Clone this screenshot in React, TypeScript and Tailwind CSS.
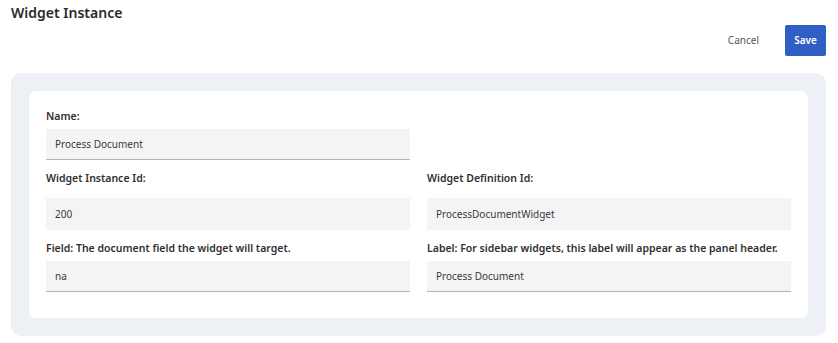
export default function App() {
  const label = "text-[10.5px] leading-[16px] font-semibold text-[#303030]";
  const input =
    "h-[31px] bg-[#f4f4f4] px-[9px] flex items-center text-[10px] text-[#3a3a3a]";

  return (
    <div className="w-[838px] h-[343px] bg-white font-['Noto_Sans',sans-serif] pt-[3px]">
      <h1 className="px-[11px] text-[14px] leading-[20px] font-semibold text-[#2b2b2b]">
        Widget Instance
      </h1>

      <div className="mt-[2px] flex items-center justify-end gap-[26px] pr-[12px]">
        <button className="text-[10px] text-[#555555]">Cancel</button>
        <button className="h-[31px] w-[41px] rounded-[2px] bg-[#2f5ec4] text-[10px] font-semibold text-white">
          Save
        </button>
      </div>

      <div className="mx-[11px] mr-[12px] mt-[17px] rounded-[10px] bg-[#edf0f4] p-[18px]">
        <div className="rounded-[7px] bg-white px-[17px] pt-[17px] pb-[26px]">
          <div className="grid grid-cols-2 gap-x-[17px]">
            <div>
              <div className={label}>Name:</div>
              <div className={`${input} mt-[5px] border-b border-[#b4b4b4]`}>
                Process Document
              </div>
            </div>
            <div />

            <div className="mt-[10px]">
              <div className={label}>Widget Instance Id:</div>
              <div className={`${input} mt-[12px] h-[32px]`}>200</div>
            </div>
            <div className="mt-[10px]">
              <div className={label}>Widget Definition Id:</div>
              <div className={`${input} mt-[12px] h-[32px]`}>
                ProcessDocumentWidget
              </div>
            </div>

            <div className="mt-[10px]">
              <div className={label}>
                Field: The document field the widget will target.
              </div>
              <div className={`${input} mt-[5px] border-b border-[#b4b4b4]`}>
                na
              </div>
            </div>
            <div className="mt-[10px]">
              <div className={label}>
                Label: For sidebar widgets, this label will appear as the panel
                header.
              </div>
              <div className={`${input} mt-[5px] border-b border-[#b4b4b4]`}>
                Process Document
              </div>
            </div>
          </div>
        </div>
      </div>
    </div>
  );
}
